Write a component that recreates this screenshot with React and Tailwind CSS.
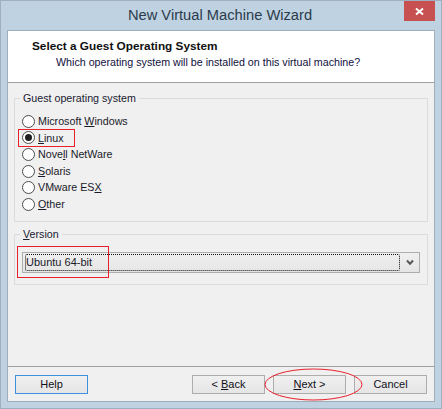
const FONT = "font-['Liberation_Sans','Open_Sans',sans-serif]";

const options = [
  { pre: "Microsoft ", key: "W", post: "indows" },
  { pre: "", key: "L", post: "inux", checked: true },
  { pre: "Nove", key: "l", post: "l NetWare" },
  { pre: "", key: "S", post: "olaris" },
  { pre: "VMware ES", key: "X", post: "" },
  { pre: "", key: "O", post: "ther" },
];

function Radio({ option }) {
  return (
    <div className="flex items-center h-[16.6px]">
      <span className="w-[13px] h-[13px] rounded-full border border-[#4d4d4d] bg-white flex items-center justify-center">
        {option.checked && <span className="w-[7px] h-[7px] rounded-full bg-[#1f1f1f]" />}
      </span>
      <span className="ml-[3px]">
        {option.pre}
        <u>{option.key}</u>
        {option.post}
      </span>
    </div>
  );
}

function Button({ children, focused, className = "" }) {
  return (
    <button
      className={`h-[19px] flex items-center justify-center text-[11px] text-[#101020] bg-gradient-to-b from-[#f0f0f0] to-[#e5e5e5] border ${
        focused ? "border-[#3f8fe0]" : "border-[#adadad]"
      } ${className}`}
    >
      {children}
    </button>
  );
}

export default function App() {
  return (
    <div className={`relative w-[442px] h-[409px] overflow-hidden bg-[#bfd2e2] border border-[#9fb0c0] flex flex-col text-[10.7px] leading-none text-[#1a1a2a] ${FONT}`}>
      <div className="h-[29px] pr-[2px] flex items-center justify-center text-[14.7px] text-[#2b3b4b]">
        New Virtual Machine Wizard
      </div>
      <button className="absolute top-[0px] right-[6px] w-[31px] h-[20px] bg-[#c75050] flex items-center justify-center">
        <svg width="9" height="9" viewBox="0 0 9 9" fill="none" stroke="#fff" strokeWidth="2">
          <path d="M1 1.5 8 7.5M8 1.5 1 7.5" />
        </svg>
      </button>

      <div className="flex-1 mx-[6px] mb-[6px] border border-[#a0aebc] bg-[#f0f0f0] flex flex-col">
        <div className="h-[52px] bg-white border-b border-[#a0a0a0] pl-[24px] pt-[7px]">
          <div className="font-bold text-[#101010] text-[11.8px] leading-[16px]">Select a Guest Operating System</div>
          <div className="pl-[24px] text-[#101040] leading-[16px]">
            Which operating system will be installed on this virtual machine?
          </div>
        </div>

        <div className="flex-1 flex flex-col px-[6px] pt-[8px]">
          <fieldset className="h-[131px] border border-[#dcdcdc] px-[7px]">
            <legend className="px-[3px] ml-[-2px] leading-[14px] text-[#202030]">Guest operating system</legend>
            <div className="pt-[8px]">
              {options.map((option) => (
                <Radio key={option.key} option={option} />
              ))}
            </div>
          </fieldset>

          <fieldset className="mt-[5px] h-[58px] border border-[#dcdcdc] px-[7px]">
            <legend className="px-[3px] ml-[-2px] leading-[14px] text-[#202030]">
              <u>V</u>ersion
            </legend>
            <div className="mt-[11px] h-[21px] border border-[#adadad] bg-gradient-to-b from-[#f0f0f0] to-[#e5e5e5] flex items-center pl-[2px] pr-[19px] relative">
              <div className="flex-1 h-[17px] border border-dotted border-[#111] rounded-[2px] flex items-center">
                <span className="text-[11px]">Ubuntu 64-bit</span>
              </div>
              <svg className="absolute right-[5px] top-[6px]" width="8" height="7" viewBox="0 0 8 7" fill="none" stroke="#555" strokeWidth="2">
                <path d="M1 1.5 4 4.8 7 1.5" />
              </svg>
            </div>
          </fieldset>
        </div>

        <div className="h-[35px] border-t border-[#a0a0a0] flex items-start pt-[8px] px-[7px]">
          <Button focused className="w-[73px]">Help</Button>
          <Button className="w-[73px] ml-[104px]">&lt; <u className="ml-[3px]">B</u>ack</Button>
          <Button className="w-[73px] ml-[8px]"><u>N</u>ext &gt;</Button>
          <Button className="w-[73px] ml-[8px]">Cancel</Button>
        </div>
      </div>

      {/* red annotations drawn over the dialog */}
      <div className="absolute left-[17px] top-[128px] w-[57px] h-[18px] border border-[#e8202a]" />
      <div className="absolute left-[16px] top-[245px] w-[92px] h-[32px] border border-[#e8202a]" />
      <svg className="absolute left-[263px] top-[367px]" width="100" height="33" viewBox="0 0 100 33" fill="none" stroke="#e8202a">
        <ellipse cx="49.5" cy="16.5" rx="48.5" ry="15.5" />
      </svg>
    </div>
  );
}
